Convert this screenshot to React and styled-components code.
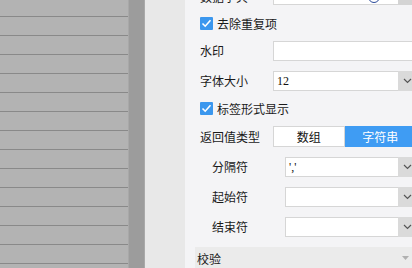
import React from "react";
import styled, { createGlobalStyle } from "styled-components";

const GlobalStyle = createGlobalStyle`
  html, body {
    margin: 0;
    padding: 0;
    width: 412px;
    height: 268px;
    overflow: hidden;
    font-family: "Noto Sans CJK SC", "Noto Sans", sans-serif;
    font-size: 12px;
    color: #1a1a1a;
  }
`;

const Page = styled.div`
  display: flex;
  height: 268px;
  width: 412px;
  overflow: hidden;
`;

const ListPane = styled.div`
  flex: 0 0 128px;
  background: #b3b3b3;
  border-right: 1px solid #a8a8a8;
  display: flex;
  flex-direction: column;
`;

const ListRow = styled.div`
  flex: 0 0 18px;
  border-bottom: 1px solid #898989;
  &:first-child {
    margin-top: -2px;
  }
`;

const Strip = styled.div`
  flex: 0 0 15px;
  background: #9c9c9c;
  border-right: 1px solid #a9a9a9;
`;

const Gutter = styled.div`
  flex: 0 0 40px;
  background: #e8e8e8;
`;

const Panel = styled.div`
  flex: 0 0 216px;
  padding-left: 15px;
  background: #f4f4f6;
  display: flex;
  flex-direction: column;
`;

const Row = styled.div`
  display: flex;
  align-items: center;
  height: ${(p) => p.$h || 20}px;
  margin-top: ${(p) => p.$mt || 0}px;
  padding-left: ${(p) => p.$indent || 0}px;
  flex-shrink: 0;
`;

const Label = styled.span`
  flex: 0 0 73px;
  white-space: nowrap;
  line-height: 20px;
`;

const Box = styled.div`
  flex: 1;
  height: 20px;
  box-sizing: border-box;
  border: 1px solid #d6d6d6;
  background: #fff;
  display: flex;
  align-items: center;
  overflow: visible;
`;

const Value = styled.span`
  flex: 1;
  padding-left: 3px;
  font-family: "Liberation Serif", serif;
  font-size: 12px;
  color: #111;
`;

const DropBtn = styled.div`
  flex: 0 0 18px;
  height: 20px;
  margin: -1px -1px -1px 0;
  background: ${(p) => (p.$light ? "#d4d4d4" : "#dadada")};
  display: flex;
  align-items: center;
  justify-content: center;
`;

const Check = styled.label`
  display: flex;
  align-items: center;
  gap: 4px;
  white-space: nowrap;
`;

const Segmented = styled.div`
  flex: 1;
  height: 21px;
  display: flex;
`;

const SegItem = styled.div`
  flex: 1;
  box-sizing: border-box;
  display: flex;
  align-items: center;
  justify-content: center;
  background: ${(p) => (p.$active ? "#3f9cf3" : "#fff")};
  color: ${(p) => (p.$active ? "#fff" : "#111")};
  border: 1px solid ${(p) => (p.$active ? "#3f9cf3" : "#d6d6d6")};
`;

const SectionHead = styled.div`
  flex-shrink: 0;
  margin-top: 10px;
  margin-left: -5px;
  height: 22px;
  padding: 0 7px 0 2px;
  background: #ebebeb;
  display: flex;
  align-items: center;
  justify-content: space-between;
`;

const Chevron = () => (
  <svg width="9" height="6" viewBox="0 0 9 6">
    <polyline points="1,1 4.5,4.5 8,1" fill="none" stroke="#555" strokeWidth="1.2" />
  </svg>
);

const CheckIcon = () => (
  <svg width="13" height="13" viewBox="0 0 13 13">
    <rect width="13" height="13" rx="1" fill="#3b97ee" />
    <polyline points="2.5,6.5 5.2,9.2 10.5,3.2" fill="none" stroke="#fff" strokeWidth="1.6" />
  </svg>
);

const Caret = () => (
  <svg width="7" height="4" viewBox="0 0 7 4">
    <polygon points="0,0 7,0 3.5,4" fill="#b0b0b0" />
  </svg>
);

const ClearIcon = styled.span`
  width: 10px;
  height: 10px;
  margin: 4px 18px 0 0;
  border: 1px solid #2a4a9a;
  border-radius: 50%;
`;

function Select({ value, light, children }) {
  return (
    <Box>
      <Value>{value}</Value>
      {children}
      <DropBtn $light={light}>{!light && <Chevron />}</DropBtn>
    </Box>
  );
}

export default function App() {
  const rows = Array.from({ length: 14 });
  return (
    <>
      <GlobalStyle />
      <Page>
        <ListPane>
          {rows.map((_, i) => (
            <ListRow key={i} />
          ))}
        </ListPane>
        <Strip />
        <Gutter />
        <Panel>
          <Row $mt={-15}>
            <Label style={{ marginTop: 4 }}>数据字典</Label>
            <Select light>
              <ClearIcon />
            </Select>
          </Row>
          <Row $mt={12} $h={13}>
            <Check>
              <CheckIcon />
              去除重复项
            </Check>
          </Row>
          <Row $mt={11}>
            <Label>水印</Label>
            <Box />
          </Row>
          <Row $mt={10}>
            <Label>字体大小</Label>
            <Select value="12" />
          </Row>
          <Row $mt={11} $h={13}>
            <Check>
              <CheckIcon />
              标签形式显示
            </Check>
          </Row>
          <Row $mt={11} $h={21}>
            <Label>返回值类型</Label>
            <Segmented>
              <SegItem>数组</SegItem>
              <SegItem $active>字符串</SegItem>
            </Segmented>
          </Row>
          <Row $mt={10} $indent={12}>
            <Label>分隔符</Label>
            <Select value="','" />
          </Row>
          <Row $mt={10} $indent={12}>
            <Label>起始符</Label>
            <Select />
          </Row>
          <Row $mt={10} $indent={12}>
            <Label>结束符</Label>
            <Select />
          </Row>
          <SectionHead>
            <span>校验</span>
            <Caret />
          </SectionHead>
        </Panel>
      </Page>
    </>
  );
}
